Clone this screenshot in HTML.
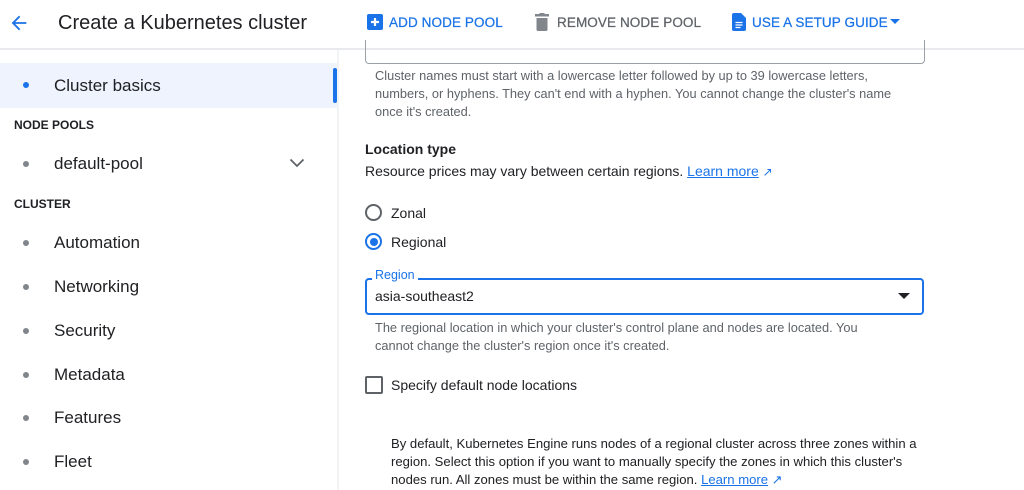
<!DOCTYPE html>
<html><head><style>
*{margin:0;padding:0;box-sizing:border-box}
body{width:1024px;height:490px;overflow:hidden;background:#fff;font-family:"Liberation Sans",sans-serif;color:#202124;position:relative}
.a{position:absolute;white-space:nowrap}
.nav{font-size:17px;color:#202124}
.dot{position:absolute;width:6px;height:6px;border-radius:50%;background:#80868b}
.sec{font-size:12px;font-weight:bold;color:#202124}
.help{font-size:12.8px;color:#5f6368;line-height:18px}
.btn{font-size:13.5px;letter-spacing:0.1px;-webkit-text-stroke:0.25px currentColor}
a{color:#1a73e8;text-decoration:underline}
</style></head><body>
<!-- header -->
<svg class="a" style="left:8px;top:12px" width="22" height="22" viewBox="0 0 24 24"><path d="M20 11H7.8l5.6-5.6L12 4l-8 8 8 8 1.4-1.4L7.8 13H20z" fill="#1a73e8"/></svg>
<div class="a" style="left:58px;top:12px;font-size:20px">Create a Kubernetes cluster</div>
<svg class="a" style="left:367px;top:14px" width="16" height="16" viewBox="0 0 16 16"><rect width="16" height="16" rx="2" fill="#1a73e8"/><path d="M8 4v8M4 8h8" stroke="#fff" stroke-width="2.2"/></svg>
<div class="a btn" style="left:389px;top:15px;color:#1a73e8">ADD NODE POOL</div>
<svg class="a" style="left:535px;top:13px" width="14" height="18" viewBox="0 0 14 18"><rect x="0" y="1" width="14" height="2.5" fill="#80868b"/><rect x="4.5" y="0" width="5" height="2" fill="#80868b"/><path d="M1.5 5h11v11.5a1.5 1.5 0 0 1-1.5 1.5H3a1.5 1.5 0 0 1-1.5-1.5z" fill="#80868b"/></svg>
<div class="a btn" style="left:557px;top:15px;color:#5f6368">REMOVE NODE POOL</div>
<svg class="a" style="left:732px;top:13px" width="14" height="18" viewBox="0 0 14 18"><path d="M2 0h7l5 5v11a2 2 0 0 1-2 2H2a2 2 0 0 1-2-2V2a2 2 0 0 1 2-2z" fill="#1a73e8"/><path d="M3.5 9.5h7M3.5 12h7M3.5 14.5h5" stroke="#fff" stroke-width="1.2"/></svg>
<div class="a btn" style="left:752px;top:15px;color:#1a73e8">USE A SETUP GUIDE</div>
<svg class="a" style="left:890px;top:19px" width="10" height="6" viewBox="0 0 10 6"><path d="M0 0h10L5 5z" fill="#1a73e8"/></svg>
<div class="a" style="left:0;top:48px;width:1024px;height:2px;background:#e8eaed"></div>
<!-- sidebar -->
<div class="a" style="left:337px;top:50px;width:2px;height:440px;background:#f1f3f4"></div>
<div class="a" style="left:0;top:63px;width:337px;height:45px;background:#eef3fd"></div>
<div class="a" style="left:333px;top:68px;width:4px;height:35px;border-radius:2px;background:#1a73e8"></div>
<div class="dot" style="left:23px;top:82px;background:#1a73e8"></div>
<div class="a nav" style="left:54px;top:76px">Cluster basics</div>
<div class="a sec" style="left:14px;top:118px">NODE POOLS</div>
<div class="dot" style="left:23px;top:161px"></div>
<div class="a nav" style="left:54px;top:154px">default-pool</div>
<svg class="a" style="left:289px;top:158px" width="16" height="10" viewBox="0 0 16 10"><path d="M1.5 1.5l6.5 6.5 6.5-6.5" stroke="#5f6368" stroke-width="1.8" fill="none"/></svg>
<div class="a sec" style="left:14px;top:197px">CLUSTER</div>
<div class="dot" style="left:23px;top:240px"></div><div class="a nav" style="left:54px;top:233px">Automation</div>
<div class="dot" style="left:23px;top:284px"></div><div class="a nav" style="left:54px;top:277px">Networking</div>
<div class="dot" style="left:23px;top:328px"></div><div class="a nav" style="left:54px;top:321px">Security</div>
<div class="dot" style="left:23px;top:372px"></div><div class="a nav" style="left:54px;top:365px">Metadata</div>
<div class="dot" style="left:23px;top:415px"></div><div class="a nav" style="left:54px;top:408px">Features</div>
<div class="dot" style="left:23px;top:459px"></div><div class="a nav" style="left:54px;top:452px">Fleet</div>
<!-- content -->
<div class="a" style="left:365px;top:40px;width:560px;height:24px;border:1px solid #9aa0a6;border-top:none;border-radius:0 0 4px 4px"></div>
<div class="a help" style="left:375px;top:67px">Cluster names must start with a lowercase letter followed by up to 39 lowercase letters,<br>numbers, or hyphens. They can't end with a hyphen. You cannot change the cluster's name<br>once it's created.</div>
<div class="a" style="left:365px;top:141px;font-size:14px;font-weight:bold">Location type</div>
<div class="a" style="left:365px;top:163px;font-size:14px">Resource prices may vary between certain regions. <a>Learn more</a> <span style="color:#1a73e8;font-size:12px">↗</span></div>
<div class="a" style="left:365px;top:204px;width:17px;height:17px;border:2px solid #5f6368;border-radius:50%"></div>
<div class="a" style="left:391px;top:205px;font-size:14px">Zonal</div>
<div class="a" style="left:365px;top:233px;width:17px;height:17px;border:2px solid #1a73e8;border-radius:50%"></div>
<div class="a" style="left:369.5px;top:237.5px;width:8px;height:8px;background:#1a73e8;border-radius:50%"></div>
<div class="a" style="left:391px;top:234px;font-size:14px">Regional</div>
<div class="a" style="left:365px;top:278px;width:559px;height:37px;border:2px solid #1a73e8;border-radius:4px"></div>
<div class="a" style="left:372px;top:268px;background:#fff;padding:0 3px;font-size:12.5px;color:#1a73e8">Region</div>
<div class="a" style="left:375px;top:288px;font-size:14px">asia-southeast2</div>
<svg class="a" style="left:898px;top:293px" width="12" height="6" viewBox="0 0 12 6"><path d="M0 0h12L6 6z" fill="#202124"/></svg>
<div class="a help" style="left:375px;top:319px">The regional location in which your cluster's control plane and nodes are located. You<br>cannot change the cluster's region once it's created.</div>
<div class="a" style="left:365px;top:376px;width:18px;height:18px;border:2px solid #5f6368;border-radius:2px"></div>
<div class="a" style="left:391px;top:377px;font-size:14px">Specify default node locations</div>
<div class="a help" style="left:391px;top:435px;color:#202124;font-size:13.1px">By default, Kubernetes Engine runs nodes of a regional cluster across three zones within a<br>region. Select this option if you want to manually specify the zones in which this cluster's<br>nodes run. All zones must be within the same region. <a>Learn more</a> <span style="color:#1a73e8">↗</span></div>
</body></html>
